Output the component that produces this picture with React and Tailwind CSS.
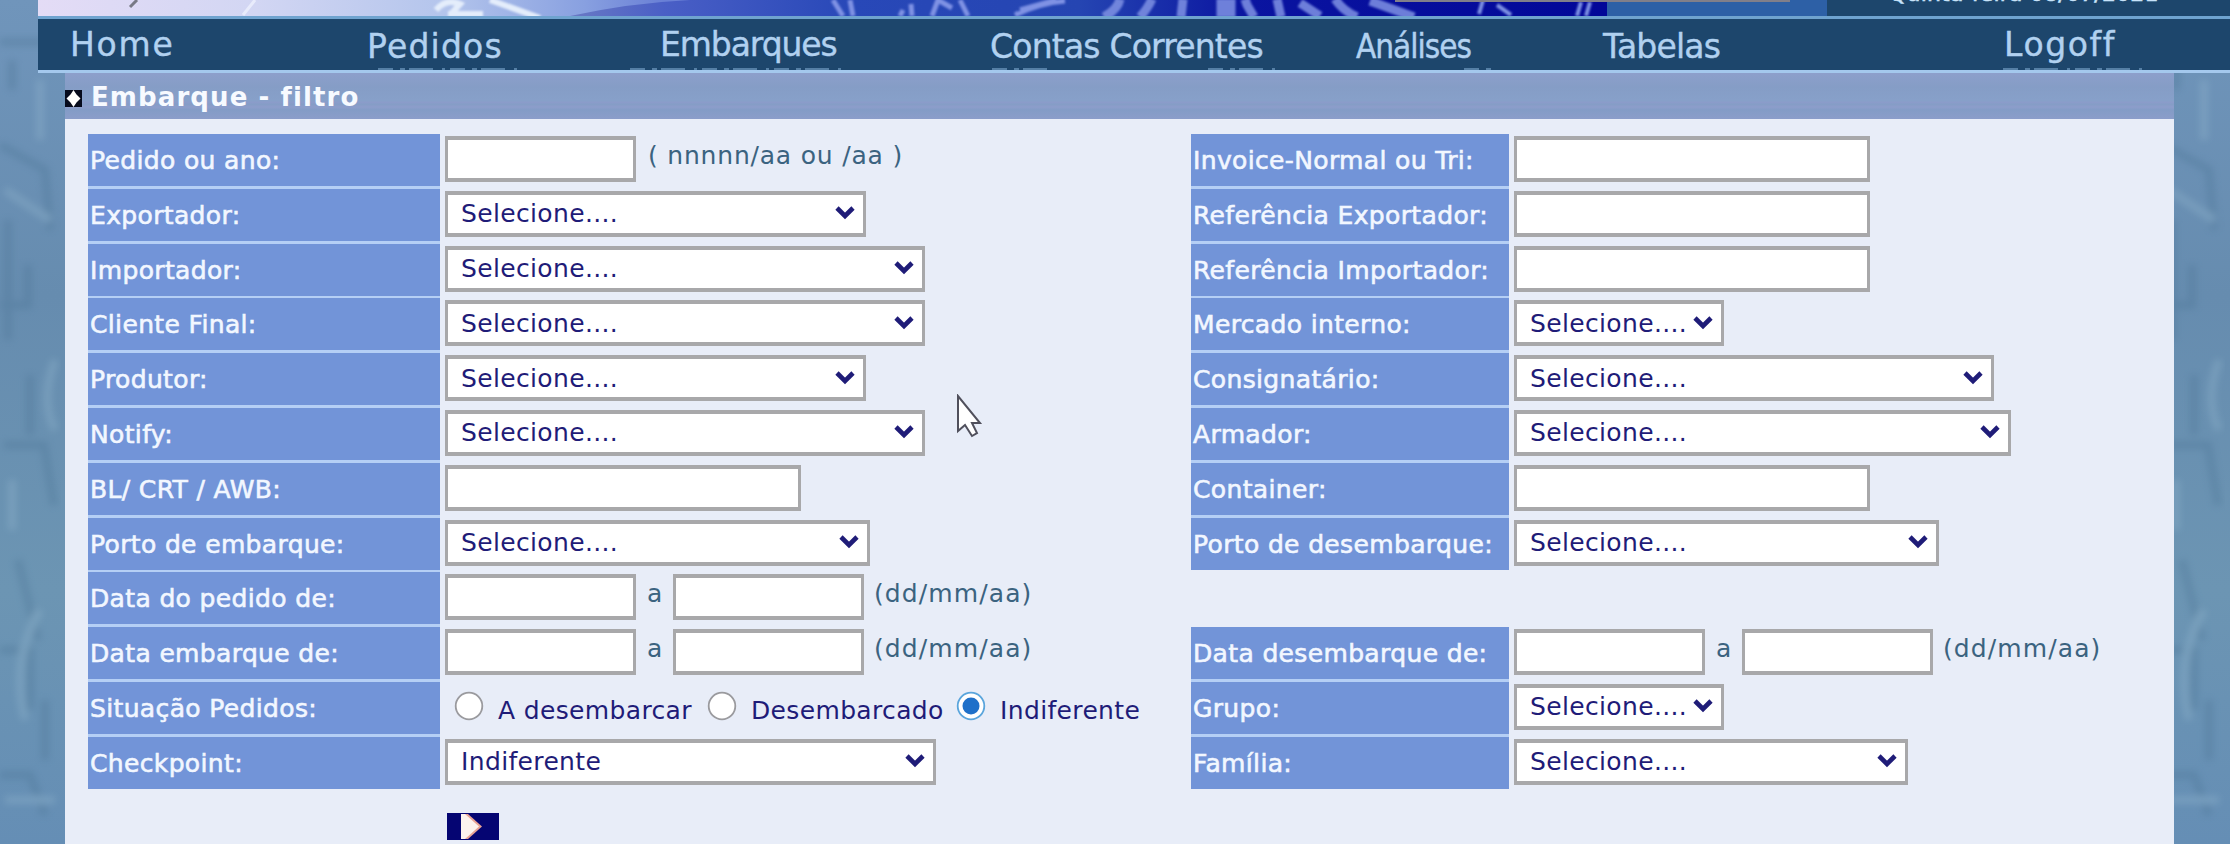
const SEL = "Selecione....";
const left = [
  ["Pedido ou ano:", "code"],
  ["Exportador:", "select", "w-[421px]"],
  ["Importador:", "select", "w-[480px]"],
  ["Cliente Final:", "select", "w-[480px]"],
  ["Produtor:", "select", "w-[421px]"],
  ["Notify:", "select", "w-[480px]"],
  ["BL/ CRT / AWB:", "input"],
  ["Porto de embarque:", "select", "w-[425px]"],
  ["Data do pedido de:", "dates"],
  ["Data embarque de:", "dates"],
  ["Situação Pedidos:", "radios"],
  ["Checkpoint:", "select", "w-[491px]", "Indiferente"],
];
const right = [
  ["Invoice-Normal ou Tri:", "input"],
  ["Referência Exportador:", "input"],
  ["Referência Importador:", "input"],
  ["Mercado interno:", "select", "w-[210px]"],
  ["Consignatário:", "select", "w-[480px]"],
  ["Armador:", "select", "w-[497px]"],
  ["Container:", "input"],
  ["Porto de desembarque:", "select", "w-[425px]"],
  null,
  ["Data desembarque de:", "dates"],
  ["Grupo:", "select", "w-[210px]"],
  ["Família:", "select", "w-[394px]"],
];
const BOX = "h-[46px] border-x-[3px] border-y-4 border-[#a8a8aa] bg-white";

function Select({ width, value = SEL }) {
  return (
    <div className={`${BOX} ${width} flex items-center justify-between pl-[13px] pr-[8px] text-[#1f1c78]`}>
      <span className="pt-px">{value}</span>
      <svg width="20" height="14" viewBox="0 0 20 14" fill="none" stroke="#1f1c78" strokeWidth="4.6" className="-ml-4 mb-px shrink-0">
        <path d="M2 2l8 8 8-8" />
      </svg>
    </div>
  );
}

function Radio({ children, checked, className }) {
  return (
    <span className={`flex items-center ${className}`}>
      <svg width="30" height="30" viewBox="0 0 30 30" className="mb-px mr-[14px]">
        <circle cx="15" cy="15" r="13.3" fill="#fff" stroke={checked ? "#5aa5dc" : "#9a9a9e"} strokeWidth="1.8" />
        {checked && <circle cx="15" cy="15" r="8.5" fill="#1f70c9" />}
      </svg>
      <span className="mt-[8px]">{children}</span>
    </span>
  );
}

function Control({ row }) {
  const [, kind, width, value] = row;
  if (kind === "select") return <Select width={width} value={value} />;
  if (kind === "input") return <div className={`${BOX} w-[356px]`} />;
  if (kind === "code")
    return (
      <div className="flex text-[#3b6380]">
        <div className={`${BOX} w-[191px]`} />
        <span className="ml-[12px] mt-[4px] tracking-[0.8px]">( nnnnn/aa ou /aa )</span>
      </div>
    );
  if (kind === "dates")
    return (
      <div className="flex text-[#3b6380]">
        <div className={`${BOX} w-[191px]`} />
        <span className="mt-[4px] w-[37px] pl-[11px]">a</span>
        <div className={`${BOX} w-[191px]`} />
        <span className="ml-[10px] mt-[4px] tracking-[1.1px]">(dd/mm/aa)</span>
      </div>
    );
  return (
    <div className="flex h-[46px] items-center pl-[9px] text-[#1f1c78]">
      <Radio className="w-[253px]">A desembarcar</Radio>
      <Radio className="w-[249px]">Desembarcado</Radio>
      <Radio checked>Indiferente</Radio>
    </div>
  );
}

function Column({ rows, labelWidth }) {
  return (
    <div className="flex flex-col gap-[2.8px]">
      {rows.map((row, i) => {
        if (!row) return <div key={i} className="h-[52px]" />;
        const joined = rows[i + 1] ? "shadow-[0_3px_0_#b5cff5]" : "";
        return (
          <div key={i} className="flex h-[52px]">
            <div className={`${labelWidth} ${joined} shrink-0 whitespace-nowrap bg-[#7294d8] pl-[2px] pt-[11px] text-[#f2f7ff] [-webkit-text-stroke:0.6px_#f2f7ff]`}>{row[0]}</div>
            <div className="whitespace-nowrap pl-[5px] pt-[2px]"><Control row={row} /></div>
          </div>
        );
      })}
    </div>
  );
}

function Water({ side }) {
  return (
    <svg width="66" height="844" viewBox="0 0 66 844" preserveAspectRatio="none" className="shrink-0">
      <defs>
        <linearGradient id={side} x2="0" y2="1">
          <stop stopColor="#7095bb" />
          <stop offset=".35" stopColor="#668caf" />
          <stop offset=".7" stopColor="#6c95b3" />
          <stop offset="1" stopColor="#658eb5" />
        </linearGradient>
        <filter id={side + "b"}><feGaussianBlur stdDeviation="3.5" /></filter>
      </defs>
      <path fill={`url(#${side})`} d="M0 0h66v844H0z" />
      <g filter={`url(#${side}b)`} fill="none" strokeWidth="8" opacity=".4">
        <path stroke="#4f7899" d="M0 42h45M12 60v30M0 145l45 25 5 60M8 220v120M28 265v40H0M30 375v60M4 445h40l10 60M18 560l20 80M0 650h30v60M0 775h30l15 40M45 700v60" />
        <path stroke="#8fb3cc" d="M40 80v60M5 190l45 30M55 360q-15 40 0 70M12 480v50M40 610q-30 50-15 110M5 800h50" />
      </g>
    </svg>
  );
}

const nav = [
  ["Home", "ml-[32px] w-[297px]", "tracking-[1.8px]"],
  ["Pedidos", "w-[293px] pt-[2px]", "tracking-[1.2px]"],
  ["Embarques", "w-[330px]", "tracking-[-1.1px]"],
  ["Contas Correntes", "w-[366px] pt-[2px]", "tracking-[-0.8px]"],
  ["Análises", "w-[247px] pt-[2px]", "tracking-[-1px] font-['DejaVu_Sans_Condensed'] [font-stretch:condensed]"],
  ["Tabelas", "w-[401px] pt-[2px]", "tracking-[-0.8px]"],
  ["Logoff", "", "tracking-[1.6px]"],
];

export default function App() {
  return (
    <div className="relative h-[844px] w-[2230px] overflow-hidden bg-[#6c92b5] font-['DejaVu_Sans',sans-serif] text-[25px] leading-[32px] tracking-[0.35px]">
      <div className="absolute inset-0 flex justify-between"><Water side="l" /><Water side="r" /></div>
      <div className="relative ml-[38px] flex h-[16px] overflow-hidden bg-[#1d466c]">
        <svg width="1789" height="16" viewBox="38 0 1789 16" className="shrink-0">
          <defs>
            <linearGradient id="banner" gradientUnits="userSpaceOnUse" x1="38" x2="1600">
              <stop stopColor="#e4dcf6" /><stop offset=".14" stopColor="#d2d6f3" /><stop offset=".26" stopColor="#b4c5ec" />
              <stop offset=".35" stopColor="#88a0e0" /><stop offset=".4" stopColor="#6a80d6" />
            </linearGradient>
            <linearGradient id="globe" gradientUnits="userSpaceOnUse" x1="560" x2="1600">
              <stop stopColor="#6d7cc4" /><stop offset=".1" stopColor="#4a5fc6" /><stop offset=".28" stopColor="#2848b8" />
              <stop offset=".5" stopColor="#2545b2" /><stop offset=".66" stopColor="#0a14a0" /><stop offset="1" stopColor="#020798" />
            </linearGradient>
            <filter id="soft"><feGaussianBlur stdDeviation="1.3" /></filter>
          </defs>
          <path fill="url(#banner)" d="M38 0h1570v16H38z" />
          <path fill="url(#globe)" d="M570 16Q630 3 690 0h918v16z" />
          <g fill="none" stroke="#7f92e4" filter="url(#soft)">
            <path strokeWidth="5" d="M833 0l10 16M850 0l3 16M900 16l3-6M912 16l-1-12M932 16l6-16 14 8M960 0l8 16M1015 15q25-12 50-14M1020 10l36-10" />
            <path strokeWidth="9" opacity=".85" d="M1104 17q14-8 16-18M1140 17q8-9 12-18M1181 17l2-18M1245 -1l2 6 7 12M1277 -1l4 18M1300 3l20 13M1335 -1q8 12 22 18M1370 1l44 16" />
            <path strokeWidth="19" opacity=".85" d="M1226 -1v18" />
            <path strokeWidth="4" d="M1483 0l-4 14M1497 5l14 10M1577 16l4-14M1586 16l4-14" />
          </g>
          <path d="M436 10q10-12 24-6l-10 11M448 14h35M490 0l50 18" fill="none" stroke="#e4edfb" strokeWidth="6" filter="url(#soft)" />
          <path d="M255 0l-12 15" stroke="#e8ebfb" strokeWidth="3" />
          <path d="M137 0l-7 7" stroke="#777985" strokeWidth="3" />
          <path fill="#2d60a6" d="M1607 0h220v16h-220z" />
          <path d="M1395 0h395v2h-395z" fill="#817f8a" />
        </svg>
        <div className="-mt-[22px] ml-[62px] whitespace-nowrap text-[22px] tracking-[0.2px] text-[#c8e3fa] [-webkit-text-stroke:0.6px_#c8e3fa]">Quinta-feira 08/07/2021</div>
      </div>
      <nav className="relative ml-[38px] flex h-[57px] whitespace-nowrap border-b-[3px] border-t-[3px] border-b-[#a4c8ed] border-t-[#6fa3cf] bg-[#1d466c] pt-[6px] text-[33px] leading-[40px] text-[#b1d1f0] [-webkit-text-stroke:0.4px_#b1d1f0]">
        {nav.map(([t, w, tr]) => <div key={t} className={`${w} shrink-0`}><span className={tr}>{t}</span></div>)}
        <svg className="absolute bottom-0 left-0" width="2192" height="2" viewBox="38 0 2192 2">
          <path d="M378 1h144M630 1h216M992 1h64M1208 1h70M1464 1h30M2003 1h140" stroke="#557fa5" strokeWidth="2" strokeDasharray="15 7 5 4 24 9 3 5" />
        </svg>
      </nav>
      <main className="relative ml-[65px] w-[2109px] bg-[#e8edf8]">
        <header className="flex h-[46px] items-center bg-[linear-gradient(#8d9fcb,#859dc6_30%,#87a0c9_60%,#8b9cca_64%,#859dc6_68%,#8d9dcb_74%,#839cc6_80%,#8b9dca)]">
          <svg width="17" height="17" viewBox="0 0 17 17" className="mt-1"><path fill="#070b1c" d="M0 0h17v17H0z" /><path fill="#fff" d="M8.500 0l3 4.500 4 4-4 4-3 4.500-3-4.500-4-4 4-4z" /></svg>
          <h1 className="ml-[9px] mt-[2px] text-[26px] font-bold tracking-[1.1px] text-[#f7faff]">Embarque - filtro</h1>
        </header>
        <div className="flex h-[725px] pl-[23px] pt-[15px]">
          <div className="w-[1103px] shrink-0">
            <Column rows={left} labelWidth="w-[352px]" />
            <button className="ml-[359px] mt-[24px] block h-[27px] w-[52px] bg-[#050572]">
              <svg width="52" height="27" viewBox="0 0 52 27"><path d="M14 1h7l14 12.500L21 26h-7z" fill="#e9a394" /><path d="M14 1h4l14 12.500L18 26h-4z" fill="#fdf3ee" /></svg>
            </button>
          </div>
          <Column rows={right} labelWidth="w-[318px]" />
        </div>
      </main>
      <svg className="absolute left-[956px] top-[394px]" width="28" height="44" viewBox="0 0 28 44">
        <path d="M2 2v35l7-6 7 11 5-3-5-10h8z" fill="#fff" stroke="#50505c" strokeWidth="2" />
      </svg>
    </div>
  );
}
